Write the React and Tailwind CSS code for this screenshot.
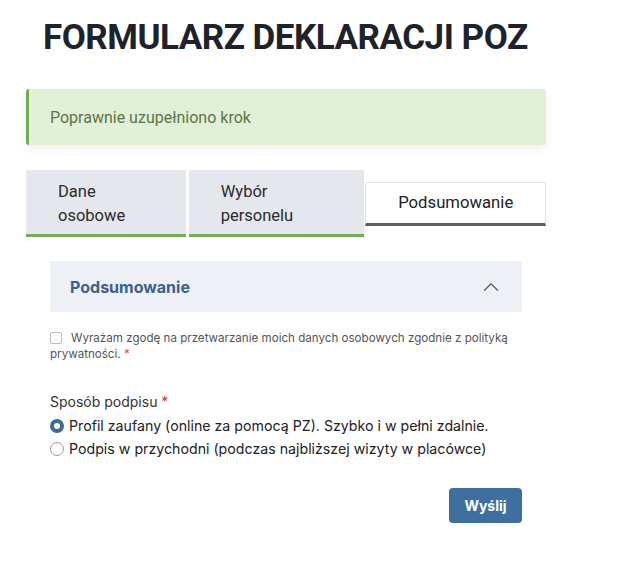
import { ChevronUp } from "lucide-react";

export default function App() {
    return (
        <div className="w-[621px] h-[581px] bg-white font-['Inter',sans-serif] pl-[26px] pt-[17px]">
            <div className="w-[520px]">
                <h1 className="pl-[17px] font-['Roboto',sans-serif] font-bold text-[35px] leading-[42px] text-[#1e222a] tracking-[-0.5px]">
                    FORMULARZ DEKLARACJI POZ
                </h1>

                <div className="mt-[30px] h-[56px] flex items-center pl-[21px] pt-[1px] bg-[#e2f0d9] border-l-[3px] border-[#6cb04f] rounded-[3px] shadow-[0_4px_10px_rgba(0,0,0,0.06)]">
                    <p className="font-['Roboto',sans-serif] text-[16px] text-[#5a7642]">
                        Poprawnie uzupełniono krok
                    </p>
                </div>

                <div className="mt-[25px] flex items-center gap-[3px]">
                    <div className="w-[160px] h-[67px] bg-[#e4e7ec] border-b-[3px] border-[#74ad55] pl-[32px] pt-[10px] font-['Roboto',sans-serif] text-[16.5px] leading-[24px] text-[#2b2b2b]">
                        Dane
                        <br />
                        osobowe
                    </div>
                    <div className="w-[176px] h-[67px] bg-[#e4e7ec] border-b-[3px] border-[#74ad55] pl-[32px] pt-[10px] font-['Roboto',sans-serif] text-[16.5px] leading-[24px] text-[#2b2b2b]">
                        Wybór
                        <br />
                        personelu
                    </div>
                    <div className="ml-[-2px] w-[181px] h-[44px] flex items-center justify-center bg-white border border-[#e3e3e3] border-b-[3px] border-b-[#5e5e5e] font-['Roboto',sans-serif] text-[16.7px] text-[#222]">
                        Podsumowanie
                    </div>
                </div>

                <div className="px-[24px]">
                    <div className="mt-[24px] h-[51px] bg-[#edf1f6] rounded-[2px] flex items-center justify-between pl-[20px] pr-[18px]">
                        <span className="text-[16px] font-bold text-[#3b6289]">
                            Podsumowanie
                        </span>
                        <ChevronUp size={26} strokeWidth={1.2} className="text-[#4d5f78]" />
                    </div>

                    <div className="mt-[18px] text-[11.6px] leading-[16px] text-[#555]">
                        <div className="whitespace-nowrap">
                            <span className="inline-block align-[-2px] w-[12px] h-[12px] border border-[#bdbdbd] rounded-[2px] bg-white mr-[9px]" />
                            Wyrażam zgodę na przetwarzanie moich danych osobowych zgodnie z polityką
                        </div>
                        <div>
                            prywatności. <span className="text-[#d9534f]">*</span>
                        </div>
                    </div>

                    <p className="mt-[30px] text-[14px] leading-[20px] text-[#333]">
                        Sposób podpisu <span className="text-[#d0342c]">*</span>
                    </p>

                    <div className="mt-[4px] flex flex-col gap-[3px] text-[14.2px] leading-[20px] text-[#222]">
                        <label className="flex items-center gap-[5px]">
                            <span className="w-[14px] h-[14px] rounded-full border-[4.5px] border-[#3c6a99] bg-white" />
                            Profil zaufany (online za pomocą PZ). Szybko i w pełni zdalnie.
                        </label>
                        <label className="flex items-center gap-[5px]">
                            <span className="w-[14px] h-[14px] rounded-full border border-[#9a9a9a] bg-white" />
                            Podpis w przychodni (podczas najbliższej wizyty w placówce)
                        </label>
                    </div>

                    <div className="mt-[29px] flex justify-end">
                        <button className="w-[73px] h-[35px] rounded-[4px] bg-[#3e6f9f] text-white text-[14px] font-bold">
                            Wyślij
                        </button>
                    </div>
                </div>
            </div>
        </div>
    );
}
